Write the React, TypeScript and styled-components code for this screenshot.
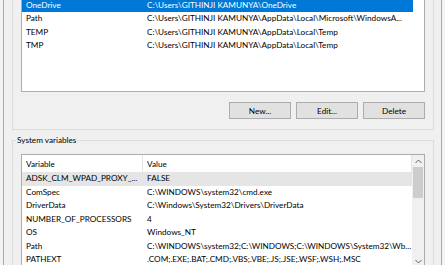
import React from 'react';
import styled, { createGlobalStyle } from 'styled-components';

type EnvVar = { name: string; value: string; selected?: 'active' | 'inactive' };

const userVars: EnvVar[] = [
  { name: 'OneDrive', value: 'C:\\Users\\GITHINJI KAMUNYA\\OneDrive', selected: 'active' },
  { name: 'Path', value: 'C:\\Users\\GITHINJI KAMUNYA\\AppData\\Local\\Microsoft\\WindowsA...' },
  { name: 'TEMP', value: 'C:\\Users\\GITHINJI KAMUNYA\\AppData\\Local\\Temp' },
  { name: 'TMP', value: 'C:\\Users\\GITHINJI KAMUNYA\\AppData\\Local\\Temp' },
];

const systemVars: EnvVar[] = [
  { name: 'ADSK_CLM_WPAD_PROXY_...', value: 'FALSE', selected: 'inactive' },
  { name: 'ComSpec', value: 'C:\\WINDOWS\\system32\\cmd.exe' },
  { name: 'DriverData', value: 'C:\\Windows\\System32\\Drivers\\DriverData' },
  { name: 'NUMBER_OF_PROCESSORS', value: '4' },
  { name: 'OS', value: 'Windows_NT' },
  { name: 'Path', value: 'C:\\WINDOWS\\system32;C:\\WINDOWS;C:\\WINDOWS\\System32\\Wb...' },
  { name: 'PATHEXT', value: '.COM;.EXE;.BAT;.CMD;.VBS;.VBE;.JS;.JSE;.WSF;.WSH;.MSC' },
];

type VarListProps = {
  vars: EnvVar[];
  height: number;
  valueWidth: number;
  header?: boolean;
  scroll?: boolean;
};

const VarList: React.FC<VarListProps> = ({ vars, height, valueWidth, header, scroll }) => (
  <ListView $height={height}>
    <ListBody>
      {header && (
        <HeaderRow>
          <HeaderCell $width={121}>Variable</HeaderCell>
          <HeaderCell $width={valueWidth}>Value</HeaderCell>
        </HeaderRow>
      )}
      {vars.map((v) => (
        <Row key={v.name + v.value} $selected={v.selected}>
          <Cell $width={121}>{v.name}</Cell>
          <Cell $width={valueWidth}>{v.value}</Cell>
        </Row>
      ))}
    </ListBody>
    {scroll && (
      <ScrollBar>
        <Arrow>
          <svg width="7" height="5" viewBox="0 0 7 5">
            <polyline points="0.5,4 3.5,1 6.5,4" fill="none" stroke="#606060" strokeWidth="1" />
          </svg>
        </Arrow>
        <Thumb />
        <Track />
        <Arrow>
          <svg width="7" height="5" viewBox="0 0 7 5">
            <polyline points="0.5,1 3.5,4 6.5,1" fill="none" stroke="#606060" strokeWidth="1" />
          </svg>
        </Arrow>
      </ScrollBar>
    )}
  </ListView>
);

const App: React.FC = () => {
  return (
    <Page>
      <GlobalStyle />
      <Dialog>
        {/* user variables group: its top edge scrolled out of the shot */}
        <Group>
          <VarList vars={userVars} height={94.5} valueWidth={270} />
          <ButtonRow>
            <Button>New...</Button>
            <Button>Edit...</Button>
            <Button>Delete</Button>
          </ButtonRow>
        </Group>
        <Group $last>
          <Legend>System variables</Legend>
          <VarList vars={systemVars} height={114} valueWidth={269} header scroll />
        </Group>
      </Dialog>
    </Page>
  );
};

export default App;

const GlobalStyle = createGlobalStyle`
  body {
    margin: 0;
    background: #f3f3f3;
    font-family: 'Lato', 'Liberation Sans', sans-serif;
    font-size: 8.2px;
    color: #000;
  }
  * {
    box-sizing: border-box;
  }
`;

const Page = styled.div`
  width: 445px;
  height: 265px;
  overflow: hidden;
  background: #f3f3f3;
`;

const Dialog = styled.div`
  margin: -10.5px 3px 0 3px;
  width: 439px;
  border-left: 1px solid #a9a9a9;
  border-right: 1px solid #a9a9a9;
  background: #f0f0f0;
  padding: 0 7px 0 8px;
  display: flex;
  flex-direction: column;
`;

const Group = styled.fieldset<{ $last?: boolean }>`
  margin: ${(p) => (p.$last ? '4px 0 0' : '0')};
  min-width: 0;
  border: 1px solid #dcdcdc;
  padding: 7px 8px ${(p) => (p.$last ? '40px' : '10px')} 8px;
`;

const Legend = styled.legend`
  font-size: 8.2px;
  line-height: 13px;
  padding: 0 1px;
  margin-left: -5px;
  color: #000;
`;

const ListView = styled.div<{ $height: number }>`
  height: ${(p) => p.$height}px;
  border: 1px solid #adadad;
  background: #fff;
  display: flex;
  overflow: hidden;
`;

const ListBody = styled.div`
  flex: 1;
  display: flex;
  flex-direction: column;
  align-items: flex-start;
`;

const HeaderRow = styled.div`
  display: flex;
  height: 17px;
  flex-shrink: 0;
`;

const HeaderCell = styled.div<{ $width: number }>`
  width: ${(p) => p.$width}px;
  padding-left: 4px;
  display: flex;
  align-items: center;
  border-right: 1px solid #e5e5e5;
  white-space: nowrap;
`;

const Row = styled.div<{ $selected?: 'active' | 'inactive' }>`
  display: flex;
  height: 13.5px;
  flex-shrink: 0;
  line-height: 13.5px;
  background: ${(p) =>
    p.$selected === 'active' ? '#0078d7' : p.$selected === 'inactive' ? '#e5e5e5' : 'transparent'};
  color: ${(p) => (p.$selected === 'active' ? '#fff' : '#000')};
`;

const Cell = styled.div<{ $width: number }>`
  width: ${(p) => p.$width}px;
  padding-left: 4px;
  white-space: nowrap;
  overflow: hidden;
`;

const ScrollBar = styled.div`
  width: 12px;
  background: #f0f0f0;
  display: flex;
  flex-direction: column;
`;

const Arrow = styled.div`
  height: 12px;
  display: flex;
  align-items: center;
  justify-content: center;
`;

const Thumb = styled.div`
  height: 31px;
  margin: 0 1px;
  background: #cdcdcd;
`;

const Track = styled.div`
  flex: 1;
`;

const ButtonRow = styled.div`
  display: flex;
  justify-content: flex-end;
  gap: 5px;
  margin-top: 10px;
`;

const Button = styled.button`
  width: 62px;
  height: 17px;
  padding: 0;
  background: #e1e1e1;
  border: 1px solid #adadad;
  border-radius: 0;
  font-family: inherit;
  font-size: 8.2px;
  color: #000;
`;
